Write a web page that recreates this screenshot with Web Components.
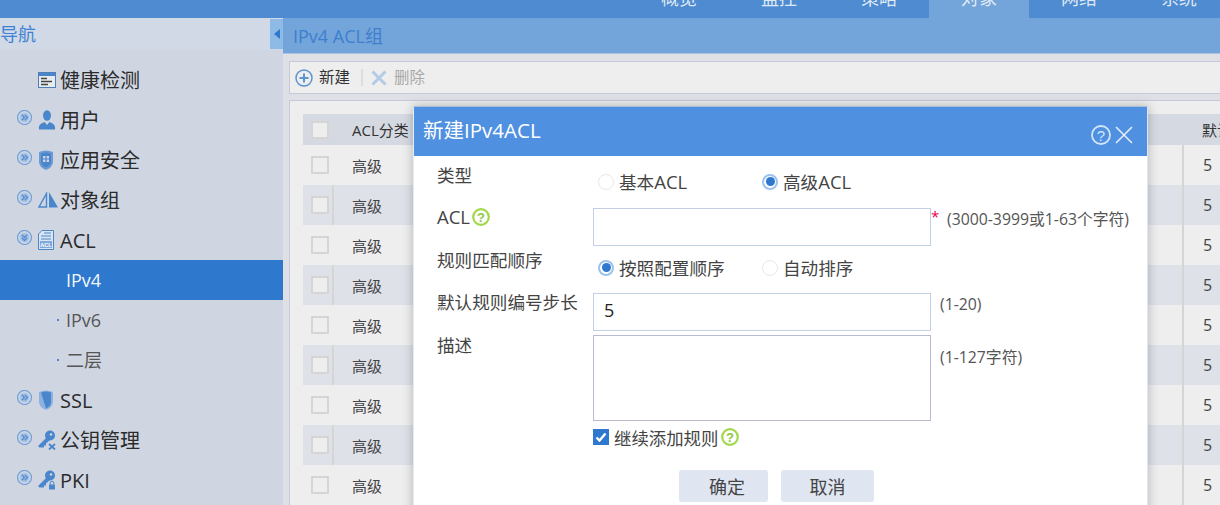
<!DOCTYPE html>
<html lang="zh">
<head>
<meta charset="utf-8">
<title>IPv4 ACL</title>
<style>
    html, body { margin: 0; height: 100%; overflow: hidden; background: #dfe0e6; }
    body { font-family: "Open Sans", "Noto Sans CJK SC", sans-serif; color: #333; }
</style>
</head>
<body>
<acl-page></acl-page>

<script>
// icones de la barre de navigation
const ICONS = {
    health: '<svg width="18" height="16" viewBox="0 0 18 16"><rect x=".5" y=".5" width="17" height="15" fill="#e8ebee" stroke="#4f7fb8"/><rect x="1" y="1" width="16" height="3" fill="#4a86cc"/><path d="M3 6.5h6M3 9.500h11M3 12.500h7" stroke="#444" stroke-width="1.500"/></svg>',
    user: '<svg width="18" height="20" viewBox="0 0 18 20"><ellipse cx="9" cy="5.500" rx="4" ry="5.200" fill="#4a86cc"/><path d="M1 19.500c-1-5 3-6.500 5.500-7.500L9 15l2.500-3c2.500 1 6.500 2.500 5.500 7.500z" fill="#4a86cc"/></svg>',
    app: '<svg width="16" height="20" viewBox="0 0 16 20"><path d="M1 2q7-3 14 0v10q0 5-7 8q-7-3-7-8z" fill="#6d9ad2"/><path d="M3 3.500q5-2 10 0v8q0 4-5 6q-5-2-5-6z" fill="#4a86cc"/><path d="M5 6h6v6H5z" fill="#cfd6e2"/><path d="M8 6v6M5 9h6" stroke="#4a86cc" stroke-width="1.200"/></svg>',
    group: '<svg width="20" height="16" viewBox="0 0 20 16"><path d="M8.500 1.500v13.500H1z" fill="none" stroke="#4a86cc" stroke-width="1.400"/><path d="M11 0l9 15.500h-9z" fill="#4a86cc"/></svg>',
    acl: '<svg width="16" height="20" viewBox="0 0 16 20"><path d="M4 .5h11.500v19H.5V4z" fill="#dbe4f0" stroke="#4a86cc"/><path d="M6 3h7M3 6h10M3 9h10" stroke="#4a86cc"/><rect x="2" y="11" width="12" height="7" fill="#7fa9dc"/><text x="8" y="17" font-size="5.500" font-weight="700" text-anchor="middle" fill="#fff" font-family="Liberation Sans">ACL</text></svg>',
    ssl: '<svg width="16" height="20" viewBox="0 0 16 20"><path d="M1 2q7-3 14 0v10q0 5-7 8q-7-3-7-8z" fill="#8db2e0"/><path d="M3 2.500q5-2 10 0v9.500q0 4-5 6.500z" fill="#4a86cc"/></svg>',
    key: '<svg width="18" height="20" viewBox="0 0 18 20"><circle cx="12" cy="5.500" r="5" fill="#4a86cc"/><circle cx="13" cy="4.500" r="1.300" fill="#cfd6e2"/><path d="M9 7l3 3-4 3.500v2H6v2H1.500L0 16z" fill="#4a86cc"/>',
    chevR: '<svg width="15" height="15" viewBox="0 0 15 15" fill="none" stroke="#6ea0da"><circle cx="7.500" cy="7.500" r="7" stroke-width="1.200"/><circle cx="7.500" cy="7.500" r="4.800" fill="#a9c3e6" stroke="none"/><path d="M4.800 4.800l2.700 2.700-2.700 2.700M7.800 4.800l2.700 2.700-2.700 2.700" stroke="#4f8bd0" stroke-width="1.300"/></svg>',
    chevD: '<svg width="15" height="15" viewBox="0 0 15 15" fill="none" stroke="#6ea0da"><circle cx="7.500" cy="7.500" r="7" stroke-width="1.200"/><circle cx="7.500" cy="7.500" r="4.800" fill="#a9c3e6" stroke="none"/><path d="M4.800 4.800l2.700 2.700 2.700-2.700M4.800 7.800l2.700 2.700 2.700-2.700" stroke="#4f8bd0" stroke-width="1.300"/></svg>'
};
ICONS.pubkey = ICONS.key + '<path d="M11 14l6 5.500M17 14l-6 5.500" stroke="#4a86cc" stroke-width="1.800"/></svg>';
ICONS.pki = ICONS.key + '<rect x="11" y="14.500" width="6" height="5" fill="#4a86cc"/><path d="M12.200 14.500v-1.500a1.800 1.800 0 0 1 3.600 0v1.500" fill="none" stroke="#4a86cc"/></svg>';

const HELP_GREEN = '<svg width="18" height="18" viewBox="0 0 18 18"><circle cx="9" cy="9" r="7.800" fill="#fff" stroke="#a2d84c" stroke-width="2.200"/><text x="9" y="13.500" font-size="13" font-weight="700" text-anchor="middle" fill="#8cc63f" font-family="Liberation Sans">?</text></svg>';

// Barre du haut avec les onglets
class TopBar extends HTMLElement {
    constructor() {
        super();
        const names = ['概览', '监控', '策略', '对象', '网络', '系统'];
        const tabs = names.map(n => `<div class="tab${n === '对象' ? ' on' : ''}"><span>${n}</span></div>`).join('');
        this.attachShadow({ mode: 'open' }).innerHTML = `
            <style>
                :host { display: flex; height: 18px; background: #4f8bd0; padding-left: 629px; overflow: hidden; }
                .tab { flex: 0 0 100px; height: 18px; color: #dfe9f6; font-size: 18px; line-height: 18px; text-align: center; }
                .tab span { display: block; margin-top: -11px; }
                .tab.on { background: #74a5da; }
            </style>
            ${tabs}
        `;
    }
}
customElements.define('top-bar', TopBar);

// Une ligne du menu de gauche
class NavItem extends HTMLElement {
    constructor() {
        super();
        const chev = this.getAttribute('chev');
        const icon = this.getAttribute('icon');
        this.attachShadow({ mode: 'open' }).innerHTML = `
            <style>
                :host { display: grid; grid-template-columns: 38px 22px 1fr; align-items: center; height: 40px; font-size: 20px; color: #2b2b2b; }
                :host([sub]) { grid-template-columns: 66px 1fr; font-size: 18px; color: #555; position: relative; }
                :host([active]) { background: #2e78ce; color: #f2f6fc; }
                :host([dot])::before { content: ""; position: absolute; left: 57px; top: 19px; width: 2px; height: 2px; background: #4f8bd0; }
                .c { display: flex; justify-self: start; margin: -7px 0 0 17px; }
                .i { display: flex; height: 20px; align-items: center; margin-top: -1px; }
                .t { line-height: 40px; margin-top: 1px; }
                :host([sub]) .t { grid-column: 2; margin-top: -1px; }
            </style>
            ${this.hasAttribute('sub') ? '' : `<div class="c">${chev ? ICONS[chev] : ''}</div><div class="i">${icon ? ICONS[icon] : ''}</div>`}
            <div class="t"><slot></slot></div>
        `;
    }
}
customElements.define('nav-item', NavItem);

class SideNav extends HTMLElement {
    constructor() {
        super();
        this.attachShadow({ mode: 'open' }).innerHTML = `
            <style>
                :host { display: block; flex: 0 0 283px; background: #cfd6e2; position: relative; }
                header { height: 32px; background: #d2d9e6; color: #3d82d4; font-size: 18px; line-height: 32px; }
                .grip { position: absolute; right: 0; top: 1px; width: 13px; height: 30px; background: #8ebbe6; display: flex; align-items: center; justify-content: center; }
                .grip i { border: 5px solid transparent; border-right: 6px solid #2e78ce; border-left: 0; }
                nav { padding-top: 10px; }
            </style>
            <header>导航</header>
            <div class="grip"><i></i></div>
            <nav><slot></slot></nav>
        `;
    }
}
customElements.define('side-nav', SideNav);

// Barre d'outils : nouveau / supprimer
class ToolBar extends HTMLElement {
    constructor() {
        super();
        this.attachShadow({ mode: 'open' }).innerHTML = `
            <style>
                :host { display: flex; align-items: center; height: 31px; margin: 7px 0 0 6px; padding-left: 5px; background: #eeeeee; border: 1px solid #c5cadb; border-right: 0; font-size: 15.500px; color: #333; }
                svg { display: block; }
                span { margin-top: -2px; }
                .sep { width: 2px; height: 17px; background: #dcdcdc; margin: 0 8px 0 11px; }
                .off { color: #a8a8a8; margin-left: 7px; }
                .new { margin-left: 6px; }
            </style>
            <svg width="18" height="18" viewBox="0 0 18 18" fill="none" stroke="#5b93d3"><circle cx="9" cy="9" r="8" stroke-width="1.500"/><path d="M9 4.500v9M4.500 9h9" stroke-width="2"/></svg>
            <span class="new">新建</span>
            <span class="sep"></span>
            <svg width="16" height="16" viewBox="0 0 16 16" stroke="#b3cbe6" stroke-width="3"><path d="M1.500 1.500l13 13M14.500 1.500l-13 13"/></svg>
            <span class="off">删除</span>
        `;
    }
}
customElements.define('tool-bar', ToolBar);

// Tableau en arriere-plan
class AclTable extends HTMLElement {
    constructor() {
        super();
        let rows = '';
        for (let i = 0; i < 9; i++) {
            rows += `<div class="row${i % 2 ? ' alt' : ''}"><div class="cb-cell"><i class="cb"></i></div><div class="cell">高级</div><div class="num">5</div></div>`;
        }
        this.attachShadow({ mode: 'open' }).innerHTML = `
            <style>
                :host { display: block; margin: 6px 0 0 6px; padding: 13px 0 0 13px; background: #eeeeee; border-top: 1px solid #c5cadb; border-left: 1px solid #c5cadb; height: 405px; font-size: 15px; color: #444; overflow: hidden; }
                .row { display: grid; grid-template-columns: 31px 848px 1fr; height: 40px; align-items: center; }
                .row.alt { background: #dee1e8; }
                .row.head { height: 31px; background: #d5d9e2; color: #333; }
                .cb-cell { box-sizing: border-box; height: 100%; display: flex; align-items: center; padding-left: 8px; }
                .alt .cb-cell { border-right: 2px solid #d5d5d5; }
                .cell { padding-left: 18px; }
                .num { height: 100%; display: flex; align-items: center; padding-left: 19px; border-left: 2px solid #d5d5d5; font-size: 16px; }
                .head .num { border: 0; padding-left: 20px; white-space: nowrap; font-size: 15px; }
                .cb { border: 2px solid #d5d5d5; background: #eeeeee; width: 14px; height: 14px; }
            </style>
            <div class="row head"><div class="cb-cell"><i class="cb"></i></div><div class="cell">ACL分类</div><div class="num">默认规则</div></div>
            ${rows}
        `;
    }
}
customElements.define('acl-table', AclTable);

class RadioOpt extends HTMLElement {
    constructor() {
        super();
        const on = this.hasAttribute('checked');
        this.attachShadow({ mode: 'open' }).innerHTML = `
            <style>
                :host { display: inline-flex; align-items: center; gap: 5px; font-size: 17.600px; color: #444; }
                i { display: flex; align-items: center; justify-content: center; width: 14px; height: 14px; border-radius: 50%; border: 1px solid #e8e8e8; background: #fff; }
                i.on { border: 2px solid #9cc2ee; width: 12px; height: 12px; }
                i.on::after { content: ""; flex: 0 0 9px; height: 9px; border-radius: 50%; background: #2e78ce; }
            </style>
            <i class="${on ? 'on' : ''}"></i><span><slot></slot></span>
        `;
    }
}
customElements.define('radio-opt', RadioOpt);

// Une ligne du formulaire : libelle + champ + indication
class FormRow extends HTMLElement {
    constructor() {
        super();
        const h = this.getAttribute('h');
        const hintTop = this.getAttribute('hint-top') || 0;
        this.attachShadow({ mode: 'open' }).innerHTML = `
            <style>
                :host { display: grid; grid-template-columns: 156px 338px 1fr; height: ${h}px; font-size: 17.600px; color: #444; }
                .lab { display: flex; gap: 2px; align-items: flex-start; line-height: 24px; white-space: nowrap; }
                .hint { font-size: 15.800px; color: #555; white-space: nowrap; padding: ${hintTop}px 0 0 9px; line-height: 20px; }
            </style>
            <div class="lab"><slot name="label"></slot></div>
            <div><slot></slot></div>
            <div class="hint"><slot name="hint"></slot></div>
        `;
    }
}
customElements.define('form-row', FormRow);

class TextBox extends HTMLElement {
    constructor() {
        super();
        this.attachShadow({ mode: 'open' }).innerHTML = `
            <style>
                :host { display: block; box-sizing: border-box; height: 38px; border: 1px solid #c3d0e4; background: #fff; padding-left: 10px; line-height: 33px; font-size: 18px; color: #222; }
                :host([area]) { height: 86px; border-color: #b9b9d0; }
            </style>
            <slot></slot>
        `;
    }
}
customElements.define('text-box', TextBox);

class AclDialog extends HTMLElement {
    constructor() {
        super();
        this.attachShadow({ mode: 'open' }).innerHTML = `
            <style>
                :host { position: absolute; left: 413px; top: 106px; width: 735px; height: 410px; box-sizing: border-box; background: #fff; border: 1px solid #a9bfdb; border-left-color: #e4ecf8; border-right-color: #dfe6f2; border-bottom: 0; box-shadow: 0 0 10px rgba(0,0,0,.25); }
                .title { height: 49px; background: #4f90e0; color: #fff; display: flex; align-items: center; padding-left: 9px; font-size: 20.500px; }
                .title span { flex: 1; margin-top: -6px; }
                .title svg { display: block; margin-top: 7px; }
                .title .x { margin: 7px 14px 0 4px; }
                .body { padding: 7px 0 0 23px; }
            </style>
            <div class="title">
                <span>新建IPv4ACL</span>
                <svg width="20" height="20" viewBox="0 0 20 20"><circle cx="10" cy="10" r="9" fill="none" stroke="#d5e5f8" stroke-width="1.800"/><text x="10" y="15.500" font-size="15" text-anchor="middle" fill="#d5e5f8" font-family="Liberation Sans">?</text></svg>
                <svg class="x" width="18" height="18" viewBox="0 0 18 18" stroke="#e4eefa" stroke-width="1.600"><path d="M1 1l16 16M17 1L1 17"/></svg>
            </div>
            <div class="body"><slot></slot></div>
        `;
    }
}
customElements.define('acl-dialog', AclDialog);

class DlgButton extends HTMLElement {
    constructor() {
        super();
        this.attachShadow({ mode: 'open' }).innerHTML = `
            <style>
                :host { display: flex; align-items: center; justify-content: center; height: 32px; background: #dfe6f2; border-radius: 3px; font-size: 18px; color: #444; }
            </style>
            <slot></slot>
        `;
    }
}
customElements.define('dlg-button', DlgButton);

// Page complete
class AclPage extends HTMLElement {
    constructor() {
        super();
        this.attachShadow({ mode: 'open' }).innerHTML = `
            <style>
                :host { display: block; height: 505px; overflow: hidden; position: relative; }
                .wrap { display: flex; height: 487px; }
                main { flex: 1; min-width: 0; background: #dfe0e6; }
                .bar { height: 36px; background: #74a5da; color: #3d7fcf; font-size: 18px; line-height: 36px; padding-left: 10px; border-bottom: 1px solid #a9c3e6; box-sizing: border-box; }
                [slot] { display: block; }
                .radios { display: flex; padding-left: 5px; }
                .radios radio-opt { width: 164px; }
                .up3 { margin-top: -3px; }
                .up2 { margin-top: -2px; }
                .en { font-size: 18.500px; }
                .grn { display: inline-flex; }
                .star { display: inline-block; width: 16px; margin-left: -9px; color: #e8004c; font-size: 15px; line-height: 10px; vertical-align: 3px; }
                .check { display: flex; align-items: center; height: 26px; margin-left: 156px; font-size: 17.400px; color: #444; }
                .box { width: 16px; height: 16px; background: #2e78ce; display: flex; margin-right: 5px; }
                .check .grn { margin-left: 3px; }
                .actions { display: flex; gap: 13px; margin: 20px 0 0 242px; }
                .actions dlg-button:first-child { width: 82px; padding-left: 7px; }
                .actions dlg-button:last-child { width: 93px; }
            </style>
            <top-bar></top-bar>
            <div class="wrap">
                <side-nav>
                    <nav-item icon="health">健康检测</nav-item>
                    <nav-item chev="chevR" icon="user">用户</nav-item>
                    <nav-item chev="chevR" icon="app">应用安全</nav-item>
                    <nav-item chev="chevR" icon="group">对象组</nav-item>
                    <nav-item chev="chevD" icon="acl">ACL</nav-item>
                    <nav-item sub active>IPv4</nav-item>
                    <nav-item sub dot>IPv6</nav-item>
                    <nav-item sub dot>二层</nav-item>
                    <nav-item chev="chevR" icon="ssl">SSL</nav-item>
                    <nav-item chev="chevR" icon="pubkey">公钥管理</nav-item>
                    <nav-item chev="chevR" icon="pki">PKI</nav-item>
                </side-nav>
                <main>
                    <div class="bar">IPv4 ACL组</div>
                    <tool-bar></tool-bar>
                    <acl-table></acl-table>
                </main>
            </div>
            <acl-dialog>
                <form-row h="45">
                    <span slot="label">类型</span>
                    <div class="radios" style="padding-top:6px"><radio-opt>基本<span class="en">ACL</span></radio-opt><radio-opt checked>高级<span class="en">ACL</span></radio-opt></div>
                </form-row>
                <form-row h="40" hint-top="1">
                    <span slot="label" class="up3 en">ACL</span><span slot="label" class="grn">${HELP_GREEN}</span>
                    <text-box></text-box>
                    <span slot="hint"><span class="star" style="display:inline-block">*</span>(3000-3999或1-63个字符)</span>
                </form-row>
                <form-row h="45">
                    <span slot="label">规则匹配顺序</span>
                    <div class="radios" style="padding-top:7px"><radio-opt checked>按照配置顺序</radio-opt><radio-opt>自动排序</radio-opt></div>
                </form-row>
                <form-row h="42" hint-top="1">
                    <span slot="label" class="up3">默认规则编号步长</span>
                    <text-box>5</text-box>
                    <span slot="hint">(1-20)</span>
                </form-row>
                <form-row h="89" hint-top="12">
                    <span slot="label" class="up2">描述</span>
                    <text-box area></text-box>
                    <span slot="hint">(1-127字符)</span>
                </form-row>
                <div class="check">
                    <span class="box"><svg width="16" height="16" viewBox="0 0 16 16" fill="none" stroke="#fff" stroke-width="2.400"><path d="M3.500 8.500l3 3 6-7"/></svg></span>
                    继续添加规则<span class="grn">${HELP_GREEN}</span>
                </div>
                <div class="actions"><dlg-button>确定</dlg-button><dlg-button>取消</dlg-button></div>
            </acl-dialog>
        `;
    }
}
customElements.define('acl-page', AclPage);
</script>
</body>
</html>
